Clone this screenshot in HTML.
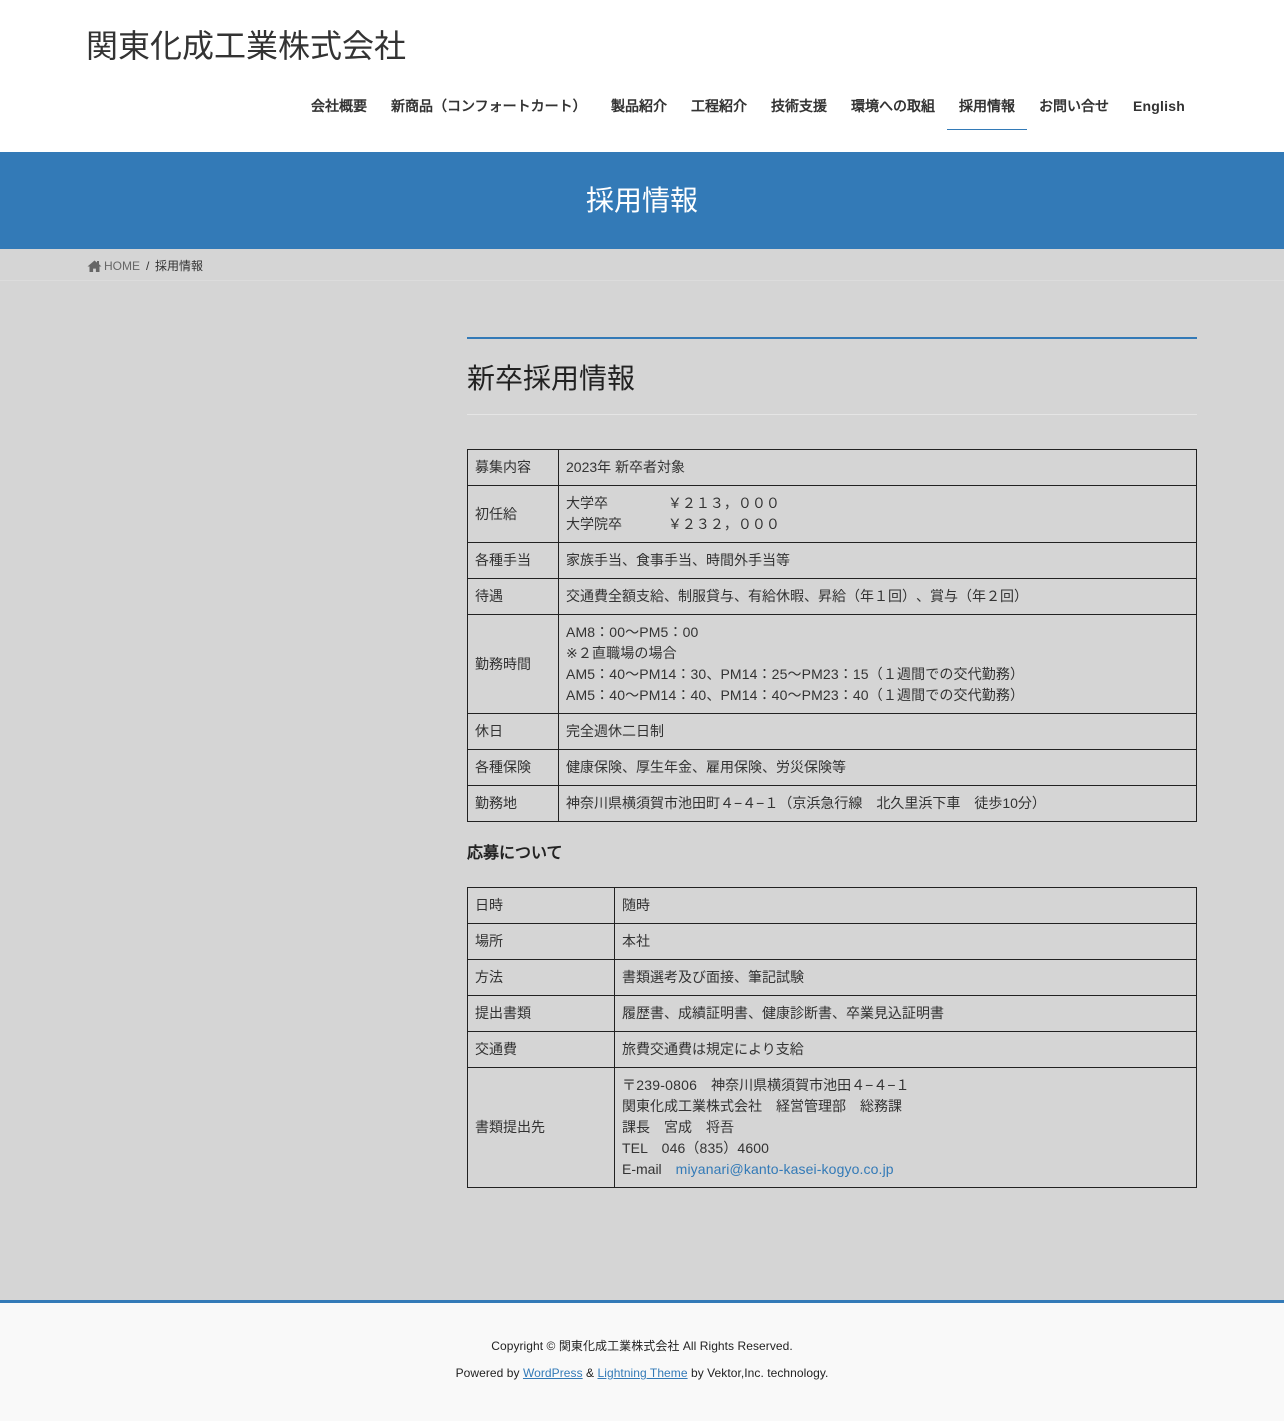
<!DOCTYPE html>
<html lang="ja">
<head>
<meta charset="utf-8">
<title>採用情報</title>
<style>
*{box-sizing:border-box}
html,body{margin:0;padding:0}
body{width:1284px;height:1421px;position:relative;overflow:hidden;background:#d5d5d5;color:#333;
font-family:"Liberation Sans","WenQuanYi Zen Hei",sans-serif;font-size:14px;line-height:21px;text-spacing-trim:space-all}
.abs{position:absolute;white-space:nowrap}
header{position:absolute;left:0;top:0;width:1284px;height:152px;background:#fff}
.logo{left:86px;top:23px;font-size:32px;line-height:46px;color:#333}
nav a{position:absolute;top:96px;font-size:14px;font-weight:bold;line-height:21px;color:#333;text-decoration:none;white-space:nowrap}
.cur{position:absolute;left:947px;top:129px;width:80px;height:1px;background:#337ab7}
.band{position:absolute;left:0;top:152px;width:1284px;height:97px;background:#337ab7;color:#fff;text-align:center;font-size:28px;line-height:98px}
.crumb{position:absolute;left:0;top:249px;width:1284px;height:32px;border-bottom:1px solid #dcdcdc;font-size:12px;line-height:34px}
.crumb svg{position:absolute;left:87px;top:11px}
.crumb span{position:absolute;white-space:nowrap}
h1{position:absolute;left:467px;top:337px;width:730px;height:78px;margin:0;border-top:2px solid #337ab7;border-bottom:1px solid #e5e5e5;font-size:28px;font-weight:normal;line-height:80px;color:#222}
table{position:absolute;left:467px;width:730px;border-collapse:collapse;table-layout:fixed;color:#333}
td{border:1px solid #222;padding:7px;font-size:14px;line-height:21px;vertical-align:middle}
h3{position:absolute;left:467px;top:843px;margin:0;font-size:16px;line-height:22px;font-weight:bold;color:#222}
a{color:#337ab7}
.w{letter-spacing:.13px}
footer{position:absolute;left:0;top:1300px;width:1284px;height:121px;background:#f9f9f9;border-top:3px solid #337ab7;text-align:center;font-size:12px;color:#222}
footer p{position:absolute;left:0;width:100%;margin:0;line-height:18px;letter-spacing:.06px}
</style>
</head>
<body>
<header>
<div class="abs logo">関東化成工業株式会社</div>
<nav>
<a style="left:311px">会社概要</a>
<a style="left:391px">新商品（コンフォートカート）</a>
<a style="left:611px">製品紹介</a>
<a style="left:691px">工程紹介</a>
<a style="left:771px">技術支援</a>
<a style="left:851px">環境への取組</a>
<a style="left:959px">採用情報</a>
<a style="left:1039px">お問い合せ</a>
<a style="left:1133px;letter-spacing:.2px">English</a>
</nav>
<div class="cur"></div>
</header>
<div class="band">採用情報</div>
<div class="crumb">
<svg style="left:86.5px" width="15" height="12" viewBox="0 0 14 12"><path fill="#666" d="M7 0.5 0 6.5h2V12h3.6V8.6h2.8V12H12V6.5h2l-2.5-2.2V1h-2v1.6z"/></svg>
<span style="left:104px;color:#666">HOME</span>
<span style="left:146px">/</span>
<span style="left:155px">採用情報</span>
</div>
<h1>新卒採用情報</h1>
<table style="top:449px">
<colgroup><col style="width:91px"><col></colgroup>
<tr><td>募集内容</td><td>2023年 新卒者対象</td></tr>
<tr><td>初任給</td><td>大学卒　　　　 ￥２１３，０００<br>大学院卒　　　 ￥２３２，０００</td></tr>
<tr><td>各種手当</td><td>家族手当、食事手当、時間外手当等</td></tr>
<tr><td>待遇</td><td>交通費全額支給、制服貸与、有給休暇、昇給（年１回）、賞与（年２回）</td></tr>
<tr><td>勤務時間</td><td class="w">AM8：00〜PM5：00<br>※２直職場の場合<br>AM5：40〜PM14：30、PM14：25〜PM23：15（１週間での交代勤務）<br>AM5：40〜PM14：40、PM14：40〜PM23：40（１週間での交代勤務）</td></tr>
<tr><td>休日</td><td>完全週休二日制</td></tr>
<tr><td>各種保険</td><td>健康保険、厚生年金、雇用保険、労災保険等</td></tr>
<tr><td>勤務地</td><td>神奈川県横須賀市池田町４−４−１（京浜急行線　北久里浜下車　徒歩10分）</td></tr>
</table>
<h3>応募について</h3>
<table style="top:887px">
<colgroup><col style="width:147px"><col></colgroup>
<tr><td>日時</td><td>随時</td></tr>
<tr><td>場所</td><td>本社</td></tr>
<tr><td>方法</td><td>書類選考及び面接、筆記試験</td></tr>
<tr><td>提出書類</td><td>履歴書、成績証明書、健康診断書、卒業見込証明書</td></tr>
<tr><td>交通費</td><td>旅費交通費は規定により支給</td></tr>
<tr><td>書類提出先</td><td><span style="letter-spacing:.22px">〒239-0806</span>　神奈川県横須賀市池田４−４−１<br>関東化成工業株式会社　経営管理部　総務課<br>課長　宮成　将吾<br><span style="letter-spacing:.13px">TEL　046（835）4600</span><br>E-mail　<a href="#" style="text-decoration:none;letter-spacing:.12px">miyanari@kanto-kasei-kogyo.co.jp</a></td></tr>
</table>
<footer>
<p style="top:34px">Copyright © 関東化成工業株式会社 All Rights Reserved.</p>
<p style="top:61px">Powered by <a href="#">WordPress</a> &amp; <a href="#">Lightning Theme</a> by Vektor,Inc. technology.</p>
</footer>
</body>
</html>
